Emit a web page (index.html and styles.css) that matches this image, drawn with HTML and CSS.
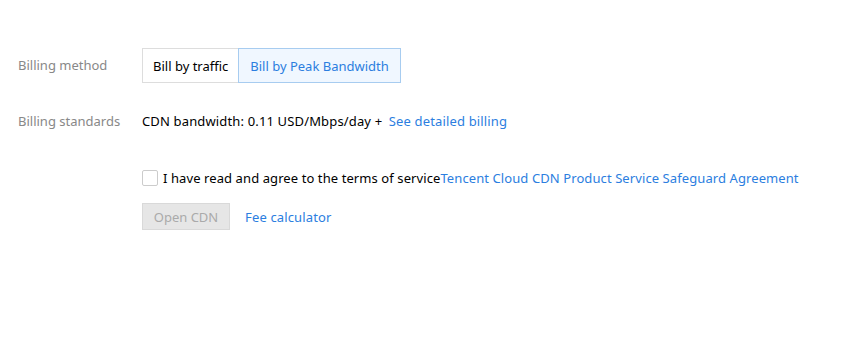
FILE: index.html
```html
<!DOCTYPE html>
<html>
<head>
<meta charset="utf-8">
<link rel="stylesheet" href="styles.css">
</head>
<body>
<div class="form">
  <div class="row row-method">
    <div class="label">Billing method</div>
    <div class="field">
      <div class="segment">
        <button class="seg-btn">Bill by traffic</button>
        <button class="seg-btn active">Bill by Peak Bandwidth</button>
      </div>
    </div>
  </div>
  <div class="row row-standards">
    <div class="label">Billing standards</div>
    <div class="field text">CDN bandwidth: 0.11 USD/Mbps/day + <a class="link">See detailed billing</a></div>
  </div>
  <div class="row row-agree">
    <div class="label"></div>
    <label class="field agree"><span class="checkbox"></span><span>I have read and agree to the terms of service<a class="link">Tencent Cloud CDN Product Service Safeguard Agreement</a></span></label>
  </div>
  <div class="row row-actions">
    <div class="label"></div>
    <div class="field actions">
      <button class="btn-disabled">Open CDN</button>
      <a class="link">Fee calculator</a>
    </div>
  </div>
</div>
</body>
</html>
```
FILE: styles.css
```css
* { box-sizing: border-box; }
html, body { margin: 0; background: #fff; }
body {
  font-family: "Noto Sans", "Open Sans", sans-serif;
  font-size: 13px;
  color: #000;
}
.form { padding: 48px 0 0 18px; }
.row { display: flex; align-items: center; }
.label { width: 124px; color: #888; flex: none; letter-spacing: 0; }
.field { letter-spacing: 0.15px; }
.row-method { height: 35px; }
.row-method .label { align-self: flex-start; padding-top: 8px; }
.segment { display: flex; height: 35px; }
.seg-btn {
  font: inherit;
  background: #fff;
  border: 1px solid #ddd;
  color: #000;
  padding: 0 10px;
  margin: 0;
  height: 35px;
}
.seg-btn.active {
  background: #f0f7ff;
  border-color: #a7ccf0;
  color: #2b7ee0;
  margin-left: -1px;
  padding: 0 11px;
}
.row-standards { margin-top: 29px; height: 18px; }
.link { color: #2b7ee0; text-decoration: none; }
.text a { margin-left: 3px; }
.row-agree { margin-top: 39px; height: 18px; }
.agree { display: flex; align-items: center; letter-spacing: 0.09px; }
.checkbox {
  width: 16px; height: 16px;
  border: 1px solid #ccc;
  border-radius: 2px;
  margin-right: 5px;
  background: #fff;
}
.row-actions { margin-top: 16px; }
.actions { display: flex; align-items: center; }
.btn-disabled {
  font: inherit;
  width: 88px;
  height: 27px;
  background: #e6e6e6;
  border: 1px solid #d9d9d9;
  color: #aaa;
  padding: 0;
  margin-right: 15px;
}
```
